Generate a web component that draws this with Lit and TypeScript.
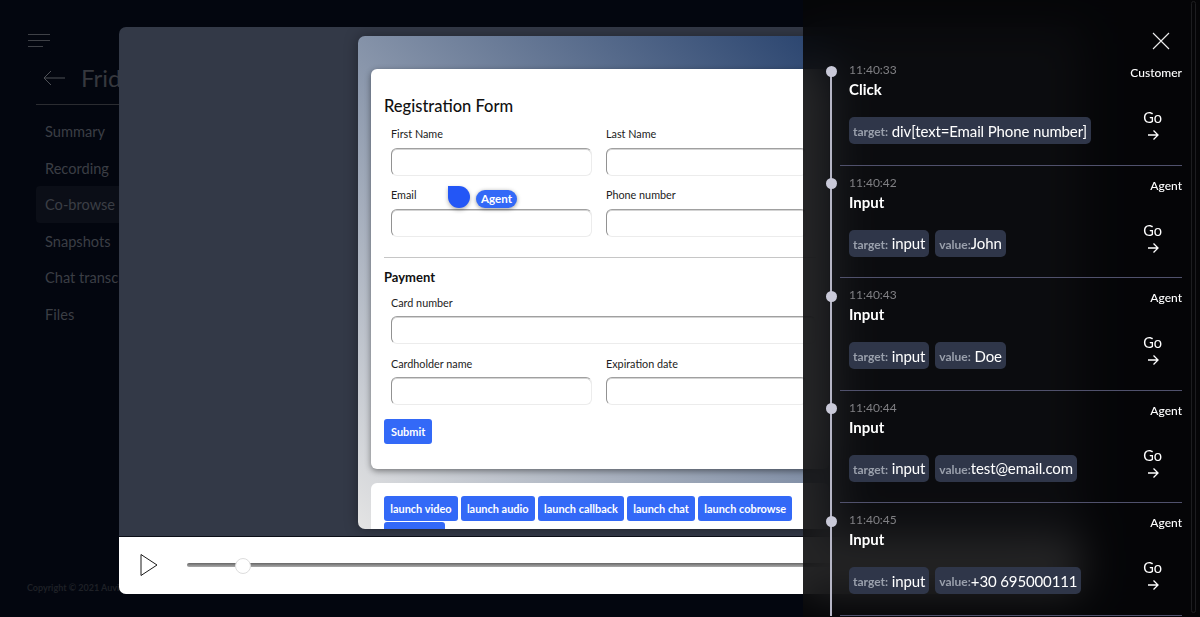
import { LitElement, html, css, svg } from "lit";
import { customElement } from "lit/decorators.js";

const NAV = ["Summary", "Recording", "Co-browse", "Snapshots", "Chat transcript", "Files"];
const EVENTS = [
  { time: "11:40:33", who: "Customer", title: "Click", chips: [["target:", " div[text=Email Phone number]"]] },
  { time: "11:40:42", who: "Agent", title: "Input", chips: [["target:", " input"], ["value:", "John"]] },
  { time: "11:40:43", who: "Agent", title: "Input", chips: [["target:", " input"], ["value:", " Doe"]] },
  { time: "11:40:44", who: "Agent", title: "Input", chips: [["target:", " input"], ["value:", "test@email.com"]] },
  { time: "11:40:45", who: "Agent", title: "Input", chips: [["target:", " input"], ["value:", "+30 695000111"]] },
];
const LAUNCH = ["launch video", "launch audio", "launch callback", "launch chat", "launch cobrowse"];

@customElement("app-root")
export class AppRoot extends LitElement {
  static styles = css`
    :host {
      display: block;
      position: relative;
      width: 1200px;
      height: 617px;
      overflow: hidden;
      background: #03060f;
      font-family: Lato, "Open Sans", sans-serif;
    }
    * { box-sizing: border-box; }

    /* dimmed page underneath */
    .side { width: 119px; padding: 34px 0 0 36px; color: #3b3e45; position: relative; height: 100%; }
    .burger { display: block; margin: 0 0 0 -8px; }
    .back { display: flex; align-items: center; gap: 16px; height: 57px; padding: 4px 0 0 7px; width: 300px; border-bottom: 1px solid #2b2c31; }
    .back span { font-size: 24px; color: #36383e; line-height: 1; }
    .nav { margin-top: 8px; width: 300px; }
    .nav div { height: 36.6px; line-height: 36.6px; padding: 1px 0 0 9px; font-size: 14.6px; white-space: nowrap; border-radius: 4px; }
    .nav div.on { background: #0b0e17; }
    .copy { position: absolute; left: 27px; top: 582px; font-size: 9px; font-weight: 700; color: #1e2026; white-space: nowrap; }

    /* modal */
    .modal { position: absolute; left: 119px; top: 27px; width: 962px; height: 567px; border-radius: 7px; overflow: hidden; background: #333947; display: flex; flex-direction: column; }
    .stage { flex: none; height: 510px; padding: 9px 0 0 239px; border-bottom: 1px solid #0c0f18; }
    .frame { width: 484px; height: 493px; border-radius: 7px; overflow: hidden; padding: 33px 13px 0; background: linear-gradient(to top right, #e4e4e4, #25406c); box-shadow: 0 0 14px rgba(0,0,0,.35); }
    .card { background: #fff; border-radius: 6px; }
    .form { position: relative; height: 400px; padding: 27px 13px 0; box-shadow: 0 2px 6px rgba(0,0,0,.45); }
    h2 { margin: 0; font-size: 16.5px; line-height: 20px; font-weight: 500; color: #111; }
    h3 { margin: 0; font-size: 13px; line-height: 16px; font-weight: 700; color: #111; }
    .grid { display: grid; grid-template-columns: 201px 201px; column-gap: 14px; padding-left: 7px; row-gap: 12px; }
    .grid.one { grid-template-columns: 1fr; }
    .f1 { margin-top: 11px; }
    label { display: block; font-size: 10.8px; line-height: 14px; color: #222; margin-bottom: 7px; }
    .tight label { margin-bottom: 6px; }
    .inp { height: 28px; border-radius: 6px; border: 1px solid; border-color: #a0a0a0 #ececec #ececec #929292; box-shadow: inset 0 1px 0 #d4d4d4; background: #fff; }
    hr { border: 0; border-top: 1px solid #c6c6c6; margin: 20px 0 11px; }
    .f3 { margin-top: 11px; }
    .f4 { margin-top: 13px; }
    .btn { display: block; height: 25px; line-height: 25px; padding: 0 6.2px; background: #3369f7; color: #fff; font-size: 10.95px; font-weight: 700; border-radius: 3px; white-space: nowrap; }
    .submit { margin-top: 14px; padding: 0 7px; width: fit-content; }
    .more { width: 61px; }
    .launch { margin-top: 14px; padding: 13px 13px 0; height: 100px; display: flex; flex-wrap: wrap; gap: 1px 3px; align-content: flex-start; }
    .pointer { position: absolute; left: 77px; top: 117px; width: 22px; height: 22px; background: #2356f6; border-radius: 0 50% 50% 50%; box-shadow: 0 2px 4px rgba(0,0,0,.3); }
    .tag { position: absolute; left: 105px; top: 121px; height: 18px; line-height: 18px; padding: 0 5px; border-radius: 9px; background: #3369f7; color: #fff; font-size: 11.6px; font-weight: 700; box-shadow: 0 1px 4px rgba(0,0,0,.4); }

    .player { flex: 1; background: #fff; display: flex; align-items: center; padding: 0 41px 1px 21px; gap: 27px; }
    .track { flex: 1; height: 4px; border-radius: 2px; background: linear-gradient(#666, #aaa); position: relative; }
    .thumb { position: absolute; left: 48px; top: -5px; width: 16px; height: 16px; border-radius: 50%; background: #fff; border: 1px solid #ddd; }

    /* right panel */
    .panel { position: absolute; left: 803px; top: 0; width: 397px; height: 617px; background: rgba(6,6,7,.87); backdrop-filter: blur(20px); color: #fff; overflow: hidden; }
    .bar { position: absolute; right: 4px; top: 1px; bottom: 4px; width: 5px; border: 1px solid #1d1d20; border-radius: 3px; }
    .close { display: flex; justify-content: flex-end; height: 53px; padding: 32px 30px 0 0; }
    .tl { position: relative; margin-left: 37px; width: 342px; }
    .tl::before { content: ""; position: absolute; left: -10px; top: 18px; bottom: 0; width: 2px; background: #b6b6c6; }
    .item { position: relative; height: 112.6px; border-bottom: 1px solid #50516c; padding: 10px 0 0 9px; display: grid; grid-template-columns: 1fr auto; }
    .item::before { content: ""; position: absolute; left: -14.5px; top: 12.5px; width: 11px; height: 11px; border-radius: 50%; background: #c9c9d8; }
    .time { font-size: 12px; line-height: 14px; color: #808084; }
    .title { font-size: 15px; line-height: 20px; font-weight: 700; margin-top: 2px; }
    .who { font-size: 12px; line-height: 20px; font-weight: 500; text-align: right; }
    .left { min-width: 0; }
    .chips { display: flex; gap: 6px; margin-top: 18px; }
    .chip { height: 27px; display: flex; align-items: center; padding: 0 4px; background: #2f3649; border-radius: 5px; font-size: 15px; letter-spacing: -.13px; white-space: pre; }
    .chip b { font-size: 12px; letter-spacing: 0; font-weight: 700; color: #9aa0ac; margin-top: 2px; }
    .go { display: flex; flex-direction: column; align-items: center; width: 19px; margin: 26px 20px 0 0; font-size: 14.5px; line-height: 18px; }
    .go svg { display: block; margin-top: 2px; }
    .rt { display: flex; flex-direction: column; align-items: flex-end; }
  `;

  render() {
    return html`
      <div class="side">
        <svg class="burger" width="24" height="14" viewBox="0 0 24 14" fill="none" stroke="#3f4147" stroke-width="1"><path d="M0 .5h22M0 6.5h22M0 12.5h15"/></svg>
        <div class="back">
          <svg width="22" height="16" viewBox="0 0 22 16" fill="none" stroke="#4f5157" stroke-width="1"><path d="M22 8H1M8 1 1 8l7 7"/></svg>
          <span>Friday</span>
        </div>
        <div class="nav">${NAV.map((n) => html`<div class=${n === "Co-browse" ? "on" : ""}>${n}</div>`)}</div>
        <div class="copy">Copyright © 2021 Auvious</div>
      </div>

      <div class="modal">
        <div class="stage">
          <div class="frame">
            <div class="card form">
              <h2>Registration Form</h2>
              <div class="grid f1">
                <div><label>First Name</label><div class="inp"></div></div>
                <div><label>Last Name</label><div class="inp"></div></div>
                <div><label>Email</label><div class="inp"></div></div>
                <div><label>Phone number</label><div class="inp"></div></div>
              </div>
              <hr />
              <h3>Payment</h3>
              <div class="grid one f3 tight"><div><label>Card number</label><div class="inp"></div></div></div>
              <div class="grid f4 tight">
                <div><label>Cardholder name</label><div class="inp"></div></div>
                <div><label>Expiration date</label><div class="inp"></div></div>
              </div>
              <span class="btn submit">Submit</span>
              <div class="pointer"></div>
              <div class="tag">Agent</div>
            </div>
            <div class="card launch">
              ${LAUNCH.map((l) => html`<span class="btn">${l}</span>`)}
              <span class="btn more"></span>
            </div>
          </div>
        </div>
        <div class="player">
          <svg width="20" height="24" viewBox="0 0 20 24" fill="none" stroke="#1a1a1a" stroke-width="1"><path d="M1 1.5v21L17 12z"/></svg>
          <div class="track"><div class="thumb"></div></div>
        </div>
      </div>

      <div class="panel">
        <div class="bar"></div>
        <div class="close">
          <svg width="18" height="18" viewBox="0 0 18 18" fill="none" stroke="#eee" stroke-width="1.1"><path d="M1 1l16 16M17 1 1 17"/></svg>
        </div>
        <div class="tl">
          ${EVENTS.map((e) => html`
            <div class="item">
              <div class="left">
                <div class="time">${e.time}</div>
                <div class="title">${e.title}</div>
                <div class="chips">${e.chips.map((c) => html`<div class="chip"><b>${c[0]}</b>${c[1]}</div>`)}</div>
              </div>
              <div class="rt">
                <div class="who">${e.who}</div>
                <div class="go">Go
                  <svg width="12" height="12" viewBox="0 0 12 12" fill="none" stroke="#fff" stroke-width="1.3">${svg`<path d="M1 6h10M6.5 1.5 11 6l-4.5 4.5"/>`}</svg>
                </div>
              </div>
            </div>`)}
        </div>
      </div>
    `;
  }
}
